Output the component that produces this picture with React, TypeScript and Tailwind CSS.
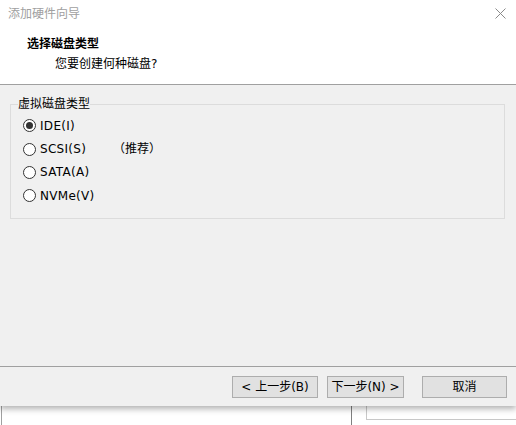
import React from "react";

const font = { fontFamily: '"DejaVu Sans", "Noto Sans CJK SC", sans-serif' };

function Radio({ checked, label, extra }: { checked?: boolean; label: string; extra?: string }) {
  return (
    <div className="flex items-center h-[23.4px]">
      <span className="w-[13px] h-[13px] rounded-full border border-[#333333] bg-white flex items-center justify-center ml-[12px]">
        {checked && <span className="w-[7px] h-[7px] rounded-full bg-[#333333]" />}
      </span>
      <span className="ml-[4px] w-[73px] text-[12px] leading-[14px] text-black tracking-[0.3px]">{label}</span>
      {extra && <span className="text-[12px] leading-[14px] text-black">{extra}</span>}
    </div>
  );
}

function Btn({ children, w }: { children: React.ReactNode; w: string }) {
  return (
    <button
      className={`${w} h-[22px] bg-[#e1e1e1] border border-[#adadad] text-[12px] leading-[14px] text-black flex items-center justify-center`}
    >
      {children}
    </button>
  );
}

export default function App() {
  return (
    <div className="w-[516px] h-[425px] bg-white overflow-hidden flex flex-col" style={font}>
      <div className="relative z-10 h-[406px] flex flex-col shadow-[0_3px_6px_rgba(0,0,0,0.3)] bg-[#f0f0f0]">
        {/* title bar */}
        <div className="h-[30px] bg-white flex items-center justify-between pl-[8px] pr-[10px]">
          <span className="text-[12px] leading-[14px] text-[#a0a0a0] -mt-[3px]">添加硬件向导</span>
          <svg width="11" height="11" viewBox="0 0 11 11" className="-mt-[4px]">
            <path d="M0.5 0.5 L10.5 10.5 M10.5 0.5 L0.5 10.5" stroke="#8a8a8a" strokeWidth="1" />
          </svg>
        </div>
        {/* header */}
        <div className="h-[55px] bg-white border-b border-[#a0a0a0] flex flex-col">
          <div className="pl-[27px] pt-[7px] text-[12px] leading-[14px] font-bold text-black">选择磁盘类型</div>
          <div className="pl-[55px] pt-[6px] text-[12px] leading-[14px] text-black">您要创建何种磁盘?</div>
        </div>
        {/* body */}
        <div className="flex-1 bg-[#f0f0f0] pt-[12px] px-[10px]">
          <fieldset className="border border-[#dcdcdc] px-[7px] pb-[10px] pt-[3px] mr-[1px]">
            <legend className="px-0 text-[12px] leading-[14px] text-black">虚拟磁盘类型</legend>
            <div className="-ml-[7px] flex flex-col">
              <Radio checked label="IDE(I)" />
              <Radio label="SCSI(S)" extra="（推荐）" />
              <Radio label="SATA(A)" />
              <Radio label="NVMe(V)" />
            </div>
          </fieldset>
        </div>
        {/* footer */}
        <div className="h-[40px] border-t border-[#a0a0a0] bg-[#f0f0f0] flex items-start pt-[9px] pl-[232px]">
          <Btn w="w-[86px]">&lt; 上一步(B)</Btn>
          <div className="w-[9px]" />
          <Btn w="w-[77px]">下一步(N) &gt;</Btn>
          <div className="w-[18px]" />
          <Btn w="w-[85px]">取消</Btn>
        </div>
      </div>
      {/* background window beneath */}
      <div className="flex-1 flex bg-white">
        <div className="w-[1px] ml-[1px] bg-[#a0a0a0]" />
        <div className="w-[349px]" />
        <div className="w-[1px] bg-[#808080]" />
        <div className="w-[14px]" />
        <div className="flex-1 h-[14px] border-l border-b border-[#c8c8c8]" />
      </div>
    </div>
  );
}
